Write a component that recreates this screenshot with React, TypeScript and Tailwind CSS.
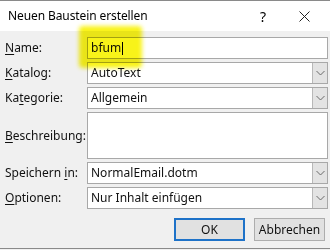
import React from "react";

const font = { fontFamily: '"Noto Sans", "Open Sans", Arial, sans-serif' };

function Label({ pre, u, post }: { pre: string; u: string; post: string }) {
  return (
    <div className="text-[12px] text-[#111] leading-none">
      {pre}
      <span className="underline underline-offset-2">{u}</span>
      {post}
    </div>
  );
}

function Chevron() {
  return (
    <svg width="9" height="6" viewBox="0 0 9 6">
      <path d="M0.5 1 L4.5 5 L8.5 1" fill="none" stroke="#6a6a6a" strokeWidth="1" />
    </svg>
  );
}

function Combo({ text }: { text: string }) {
  return (
    <div className="flex h-[22px] items-stretch border border-[#a8a8a8] bg-white">
      <div className="flex flex-1 items-center pl-[3px] text-[12px] text-[#111]">{text}</div>
      <div className="flex w-[15px] items-center justify-center border-l border-[#b8b8b8] bg-[#e3e3e3]">
        <Chevron />
      </div>
    </div>
  );
}

export default function App() {
  return (
    <div className="relative h-[250px] w-[330px] overflow-hidden bg-[#f0f0f0]" style={font}>
      {/* title bar */}
      <div className="flex h-[31px] items-center border-t border-[#8a8a8a] bg-white pl-[8px]">
        <div className="flex-1 text-[12px] tracking-[-0.1px] text-black">Neuen Baustein erstellen</div>
        <div className="mr-[33px] text-[14px] text-black">?</div>
        <div className="mr-[20px] flex items-center">
          <svg width="11" height="11" viewBox="0 0 11 11">
            <path d="M0.5 0.5 L10.5 10.5 M10.5 0.5 L0.5 10.5" stroke="#222" strokeWidth="1" />
          </svg>
        </div>
      </div>
      {/* body */}
      <div className="flex flex-col gap-[3px] pl-[5px] pr-[2px] pt-[6px]">
        <div className="flex items-center">
          <div className="w-[82px]"><Label pre="" u="N" post="ame:" /></div>
          <div className="flex h-[22px] flex-1 items-center border border-[#a8a8a8] bg-white pl-[3px] text-[12px] text-[#111]">
            bfum<span className="ml-[1px] inline-block h-[13px] w-px bg-black" />
          </div>
        </div>
        <div className="flex items-center">
          <div className="w-[82px]"><Label pre="" u="K" post="atalog:" /></div>
          <div className="flex-1"><Combo text="AutoText" /></div>
        </div>
        <div className="flex items-center">
          <div className="w-[82px]"><Label pre="Ka" u="t" post="egorie:" /></div>
          <div className="flex-1"><Combo text="Allgemein" /></div>
        </div>
        <div className="flex items-center">
          <div className="w-[82px]"><Label pre="" u="B" post="eschreibung:" /></div>
          <div className="h-[47px] flex-1 border border-[#a8a8a8] bg-white" />
        </div>
        <div className="flex items-center">
          <div className="w-[82px]"><Label pre="Speichern " u="i" post="n:" /></div>
          <div className="flex-1"><Combo text="NormalEmail.dotm" /></div>
        </div>
        <div className="flex items-center">
          <div className="w-[82px]"><Label pre="" u="O" post="ptionen:" /></div>
          <div className="flex-1"><Combo text="Nur Inhalt einfügen" /></div>
        </div>
        <div className="mt-[6px] flex justify-end gap-[9px] pr-[3px]">
          <div className="flex h-[23px] w-[71px] items-center justify-center border-2 border-[#1e72c8] bg-[#e1e1e1] text-[12px] text-[#111]">
            OK
          </div>
          <div className="flex h-[23px] w-[71px] items-center justify-center border border-[#adadad] bg-[#e1e1e1] text-[12px] text-[#111]">
            Abbrechen
          </div>
        </div>
      </div>
      {/* bottom border */}
      <div className="absolute bottom-[1px] left-0 h-px w-full bg-[#8a8a8a]" />
      {/* highlighter */}
      <div className="pointer-events-none absolute left-[79px] top-[26px] h-[42px] w-[63px] rounded-[4px] bg-[#f8f200] opacity-90 mix-blend-multiply blur-[2px]" />
    </div>
  );
}
